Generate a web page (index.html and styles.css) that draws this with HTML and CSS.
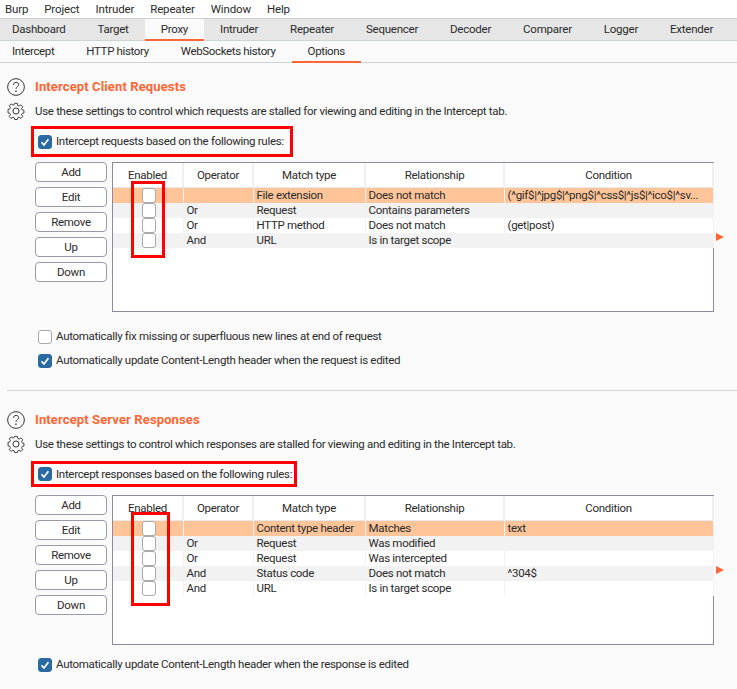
FILE: index.html
```html
<!DOCTYPE html>
<html lang="en">
<head>
<meta charset="utf-8">
<title>Burp Suite - Proxy Options</title>
<link rel="stylesheet" href="styles.css">
</head>
<body>
<nav class="menubar">
  <span>Burp</span><span>Project</span><span>Intruder</span><span>Repeater</span><span>Window</span><span>Help</span>
</nav>
<nav class="tabs main-tabs">
  <a>Dashboard</a><a>Target</a><a class="active">Proxy</a><a>Intruder</a><a>Repeater</a><a>Sequencer</a><a>Decoder</a><a>Comparer</a><a>Logger</a><a>Extender</a>
</nav>
<nav class="tabs sub-tabs">
  <a>Intercept</a><a>HTTP history</a><a>WebSockets history</a><a class="active">Options</a>
</nav>

<main>
  <section class="panel panel-requests">
    <div class="head">
      <svg class="icon" viewBox="0 0 20 20"><circle cx="10" cy="10" r="9.300"/><path d="M7.2 7.6c0-1.7 1.2-2.7 2.9-2.7s2.8 1 2.8 2.5c0 2.3-2.9 2.2-2.9 4.7"/><path class="dot" d="M9.2 14h1.5v1.600H9.2z"/></svg>
      <h2>Intercept Client Requests</h2>
      <svg class="icon" viewBox="0 0 20 20"><circle cx="10" cy="10" r="3.4"/><path d="M8.400 1.500h3.200l.5 2.500 1.600.7 2.200-1.400 2.200 2.200-1.400 2.200.7 1.600 2.100.5v3.200l-2.100.5-.7 1.600 1.400 2.200-2.200 2.200-2.200-1.400-1.600.7-.5 2h-3.200l-.5-2-1.600-.7-2.200 1.400-2.200-2.200 1.400-2.200-.7-1.600-2.100-.5V8.600l2.100-.5.7-1.600-1.400-2.200 2.200-2.200 2.200 1.400 1.600-.7z" transform="translate(10 10) scale(.93) translate(-10 -10.600)"/></svg>
      <p>Use these settings to control which requests are stalled for viewing and editing in the Intercept tab.</p>
    </div>
    <div class="highlight highlight-req">
      <span class="check on"><svg viewBox="0 0 14 14"><path d="M3 7.500l2.800 3L11 3.800"/></svg></span>
      <span>Intercept requests based on the following rules:</span>
    </div>
    <div class="rules">
      <div class="buttons">
        <button>Add</button><button>Edit</button><button>Remove</button><button>Up</button><button>Down</button>
      </div>
      <div class="table-box">
        <table>
          <thead><tr><th class="c1">Enabled</th><th class="c2">Operator</th><th class="c3">Match type</th><th class="c4">Relationship</th><th class="c5">Condition</th></tr></thead>
          <tbody>
            <tr class="sel"><td><span class="check"></span></td><td></td><td>File extension</td><td>Does not match</td><td>(^gif$|^jpg$|^png$|^css$|^js$|^ico$|^sv...</td></tr>
            <tr><td><span class="check"></span></td><td>Or</td><td>Request</td><td>Contains parameters</td><td></td></tr>
            <tr><td><span class="check"></span></td><td>Or</td><td>HTTP method</td><td>Does not match</td><td>(get|post)</td></tr>
            <tr><td><span class="check"></span></td><td>And</td><td>URL</td><td>Is in target scope</td><td></td></tr>
          </tbody>
        </table>
      </div>
      <span class="marker"></span>
      <span class="mark-box mark-req"></span>
    </div>
    <label class="opt opt-first"><span class="check"></span><span>Automatically fix missing or superfluous new lines at end of request</span></label>
    <label class="opt"><span class="check on"><svg viewBox="0 0 14 14"><path d="M3 7.500l2.800 3L11 3.800"/></svg></span><span>Automatically update Content-Length header when the request is edited</span></label>
  </section>

  <section class="panel panel-responses">
    <div class="head">
      <svg class="icon" viewBox="0 0 20 20"><circle cx="10" cy="10" r="9.300"/><path d="M7.2 7.6c0-1.7 1.2-2.7 2.9-2.7s2.8 1 2.8 2.5c0 2.3-2.9 2.2-2.9 4.7"/><path class="dot" d="M9.2 14h1.5v1.600H9.2z"/></svg>
      <h2>Intercept Server Responses</h2>
      <svg class="icon" viewBox="0 0 20 20"><circle cx="10" cy="10" r="3.4"/><path d="M8.400 1.500h3.200l.5 2.500 1.600.7 2.200-1.400 2.200 2.200-1.400 2.200.7 1.600 2.100.5v3.200l-2.100.5-.7 1.600 1.400 2.200-2.200 2.200-2.200-1.400-1.600.7-.5 2h-3.200l-.5-2-1.600-.7-2.200 1.400-2.200-2.200 1.400-2.200-.7-1.600-2.100-.5V8.600l2.100-.5.7-1.600-1.400-2.200 2.200-2.200 2.200 1.400 1.600-.7z" transform="translate(10 10) scale(.93) translate(-10 -10.600)"/></svg>
      <p>Use these settings to control which responses are stalled for viewing and editing in the Intercept tab.</p>
    </div>
    <div class="highlight highlight-res">
      <span class="check on"><svg viewBox="0 0 14 14"><path d="M3 7.500l2.800 3L11 3.800"/></svg></span>
      <span>Intercept responses based on the following rules:</span>
    </div>
    <div class="rules">
      <div class="buttons">
        <button>Add</button><button>Edit</button><button>Remove</button><button>Up</button><button>Down</button>
      </div>
      <div class="table-box">
        <table>
          <thead><tr><th class="c1">Enabled</th><th class="c2">Operator</th><th class="c3">Match type</th><th class="c4">Relationship</th><th class="c5">Condition</th></tr></thead>
          <tbody>
            <tr class="sel"><td><span class="check"></span></td><td></td><td>Content type header</td><td>Matches</td><td>text</td></tr>
            <tr><td><span class="check"></span></td><td>Or</td><td>Request</td><td>Was modified</td><td></td></tr>
            <tr><td><span class="check"></span></td><td>Or</td><td>Request</td><td>Was intercepted</td><td></td></tr>
            <tr><td><span class="check"></span></td><td>And</td><td>Status code</td><td>Does not match</td><td>^304$</td></tr>
            <tr><td><span class="check"></span></td><td>And</td><td>URL</td><td>Is in target scope</td><td></td></tr>
          </tbody>
        </table>
      </div>
      <span class="marker"></span>
      <span class="mark-box mark-res"></span>
    </div>
    <label class="opt opt-last"><span class="check on"><svg viewBox="0 0 14 14"><path d="M3 7.500l2.800 3L11 3.800"/></svg></span><span>Automatically update Content-Length header when the response is edited</span></label>
  </section>
</main>
</body>
</html>
```

FILE: styles.css
```css
* { box-sizing: border-box; }
html, body { margin: 0; padding: 0; }
body {
  width: 737px;
  height: 689px;
  overflow: hidden;
  background: #fafafa;
  color: #2b2b2b;
  font: 11.5px/15px Roboto, sans-serif;
  letter-spacing: -0.3px;
}

.menubar {
  display: flex;
  gap: 16px;
  height: 18px;
  padding: 0 0 0 5px;
  background: #fff;
  align-items: center;
  letter-spacing: -0.15px;
}

.tabs { display: flex; }
.tabs a {
  display: flex;
  align-items: center;
  padding: 0 16px;
  border-bottom: 2px solid transparent;
}
.tabs a:first-child { padding-left: 12px; }
.tabs a.active { border-bottom-color: #ff6633; background: #fafafa; }

.main-tabs {
  height: 23px;
  background: #e6e6e6;
  border-top: 1px solid #ccd0d0;
  border-bottom: 1px solid #ccd4d4;
  letter-spacing: -0.24px;
}
.main-tabs a { margin-bottom: -1px; padding-top: 1px; }
.sub-tabs {
  height: 22px;
  background: #fafafa;
  border-bottom: 1px solid #ccd4d4;
  letter-spacing: -0.35px;
}
.sub-tabs a { margin-bottom: -1px; }

.panel { margin-left: 7px; }
.panel-requests { height: 328px; padding-top: 15px; border-bottom: 1px solid #d8d8d8; }
.panel-responses { padding-top: 20px; }

.head {
  display: grid;
  grid-template-columns: 18px 1fr;
  column-gap: 10px;
  row-gap: 6px;
  align-items: center;
}
.icon {
  width: 18px;
  height: 18px;
  display: block;
  fill: none;
  stroke: #333;
  stroke-width: 1.1;
}
.icon .dot { fill: #333; stroke: none; }
h2 {
  margin: 0;
  color: #ff6633;
  font-size: 13px;
  line-height: 18px;
  font-weight: 700;
  letter-spacing: 0.12px;
}
.head p { margin: 0; }

.highlight {
  display: flex;
  align-items: center;
  gap: 4px;
  margin: 0 0 0 24px;
  border: 3px solid #ff0000;
  padding-left: 4px;
  white-space: nowrap;
}
.highlight-req { width: 262px; height: 31px; margin-top: 6px; }
.highlight-res { width: 266px; height: 26px; margin-top: 8px; }

.check {
  flex: none;
  display: inline-block;
  width: 14px;
  height: 14px;
  border: 1px solid #a9a9a9;
  border-radius: 3px;
  background: #fff;
  vertical-align: top;
}
.check.on { background: #2b6aa0; border-color: #2b6aa0; }
.check svg { display: block; width: 12px; height: 12px; fill: none; stroke: #fff; stroke-width: 2; }

.rules { position: relative; display: flex; margin-top: 5px; }
.panel-responses .rules { margin-top: 8px; }
.buttons {
  width: 72px;
  margin-left: 28px;
  display: flex;
  flex-direction: column;
  gap: 5px;
}
button {
  height: 20px;
  padding: 0;
  background: #fff;
  border: 1px solid #9a9aa6;
  border-radius: 4px;
  font: inherit;
  letter-spacing: inherit;
  color: inherit;
}
.table-box {
  width: 602px;
  height: 150px;
  margin-left: 5px;
  background: #fff;
  border: 1px solid #8b8b9b;
}
table { width: 600px; border-collapse: collapse; table-layout: fixed; }
th {
  height: 24px;
  padding: 2px 0 0;
  font-weight: 400;
  border-right: 2px solid #f0f0f0;
  border-bottom: 1px solid #e8e8e8;
}
.c1 { width: 70px; }
.c2 { width: 70px; }
.c3 { width: 112px; }
.c4 { width: 139px; }
.c5 { width: 209px; }
td {
  height: 15px;
  padding: 0 0 0 3px;
  white-space: nowrap;
  overflow: hidden;
  border-right: 1px solid #f2f2f2;
}
td:first-child { padding: 0 0 0 29px; overflow: visible; }
td .check { display: block; height: 15px; }
tbody tr:nth-child(even) { background: #f2f2f2; }
tbody tr.sel { background: #ffc599; }

.marker {
  position: absolute;
  left: 709px;
  top: 71px;
  width: 0;
  height: 0;
  border-left: 8px solid #ff6633;
  border-top: 4px solid transparent;
  border-bottom: 4px solid transparent;
}

.mark-box { position: absolute; border: 3px solid #ff0000; }
.mark-req { left: 124px; top: 19px; width: 34px; height: 77px; }
.mark-res { left: 124px; top: 17px; width: 39px; height: 94px; }

.opt { display: flex; align-items: center; gap: 4px; margin-left: 31px; height: 15px; }
.opt-first { margin-top: 17px; }
.opt + .opt { margin-top: 9px; }
.opt-last { margin-top: 12px; }
```
